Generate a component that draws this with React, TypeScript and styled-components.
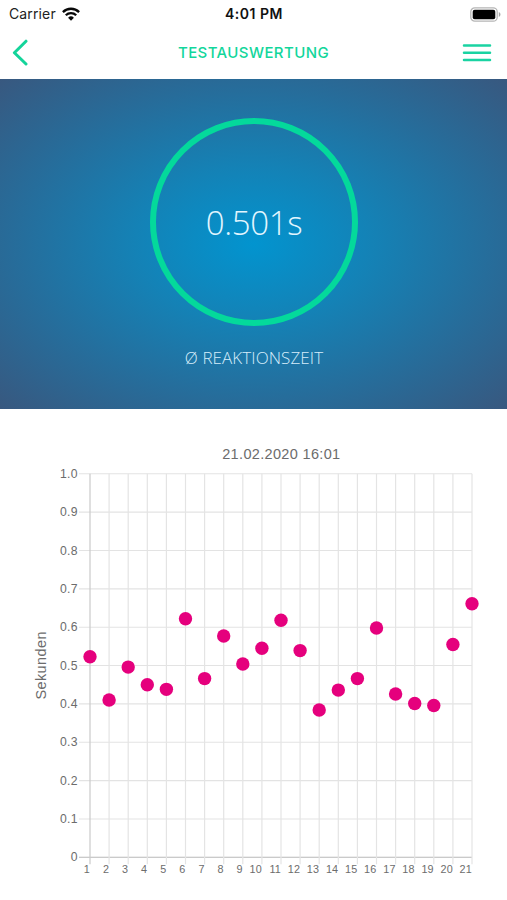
import React from 'react';
import styled, { createGlobalStyle } from 'styled-components';

const GlobalStyle = createGlobalStyle`
  * { box-sizing: border-box; }
  body { margin: 0; background: #fff; }
`;

const Screen = styled.main`
  width: 507px;
  height: 900px;
  display: flex;
  flex-direction: column;
  overflow: hidden;
  background: #fff;
`;

const StatusBar = styled.div`
  height: 27px;
  flex: none;
  display: grid;
  grid-template-columns: 1fr auto 1fr;
  align-items: center;
  padding: 1px 6px 0 9px;
  font: 400 14px/26px Inter, sans-serif;
  color: #222;
`;

const Carrier = styled.div`
  display: flex;
  align-items: center;
  gap: 6px;
  letter-spacing: 0.13px;
`;

const Clock = styled.time`
  margin-right: 2px;
  font-weight: 600;
  font-size: 14px;
  letter-spacing: 0.5px;
  color: #111;
`;

const BatteryIcon = styled.svg`
  justify-self: end;
`;

const NavBar = styled.header`
  height: 52px;
  flex: none;
  display: grid;
  grid-template-columns: 1fr auto 1fr;
  align-items: center;
  padding: 0 15px 2px 12px;
`;

const IconButton = styled.button<{ $end?: boolean }>`
  display: flex;
  padding: 0;
  border: 0;
  background: none;
  justify-self: ${(p) => (p.$end ? 'end' : 'start')};
`;

const Title = styled.h1`
  margin: 1px 0 0 3px;
  font: 500 15px/20px Inter, sans-serif;
  letter-spacing: 0.4px;
  color: #12d69b;
`;

const Hero = styled.section`
  height: 330px;
  flex: none;
  display: flex;
  flex-direction: column;
  align-items: center;
  padding: 39px 0 0 1px;
  background: radial-gradient(ellipse farthest-corner at center, #0294cf 0%, #1482b6 33%, #266d9b 66%, #38587f 100%);
`;

const Ring = styled.div`
  width: 208px;
  height: 208px;
  display: flex;
  align-items: center;
  justify-content: center;
  border: 6px solid #04d99b;
  border-radius: 50%;
  padding-top: 1px;
  font: 300 33px/40px "Open Sans", sans-serif;
  letter-spacing: -0.35px;
  color: #e2f6ff;
`;

const HeroLabel = styled.div`
  margin-top: 20px;
  font: 300 17px/24px "Open Sans", sans-serif;
  letter-spacing: 0.08px;
  color: #d6edfb;
`;

const ChartSection = styled.section`
  flex: 1;
  display: flex;
`;

const Chart = styled.svg`
  display: block;
  font-family: "Liberation Sans", Arial, sans-serif;
  fill: #6c6c6c;
`;

const LEFT = 90;
const RIGHT = 472;
const TOP = 64.8;
const BOTTOM = 448.3;

const times = [
  0.523, 0.41, 0.496, 0.45, 0.438, 0.622, 0.466, 0.577, 0.504, 0.545, 0.618,
  0.539, 0.384, 0.436, 0.466, 0.598, 0.426, 0.401, 0.396, 0.555, 0.661,
];
const ticks = ['0', '0.1', '0.2', '0.3', '0.4', '0.5', '0.6', '0.7', '0.8', '0.9', '1.0'];

const xAt = (i: number) => LEFT + (i * (RIGHT - LEFT)) / (times.length - 1);
const yAt = (v: number) => BOTTOM - v * (BOTTOM - TOP);

function ReactionChart() {
  return (
    <Chart width="507" height="491" viewBox="0 0 507 491">
      <text x="281.2" y="50" textAnchor="middle" fontSize="14.5" textLength="118">
        21.02.2020 16:01
      </text>
      <text
        transform="translate(45.5 256.5) rotate(-90)"
        textAnchor="middle"
        fontSize="14.5"
        textLength="68"
      >
        Sekunden
      </text>
      {ticks.map((label, i) => {
        const y = yAt(i / 10);
        return (
          <g key={label}>
            <line x1="79" x2={RIGHT} y1={y} y2={y} stroke={i === 0 ? '#b9b9b9' : '#e3e3e3'} strokeWidth="1.1" />
            <text x="77.8" y={y + 4} textAnchor="end" fontSize="12.2" letterSpacing="0.25">{label}</text>
          </g>
        );
      })}
      {times.map((_, i) => (
        <g key={i}>
          <line
            x1={xAt(i)}
            x2={xAt(i)}
            y1={TOP}
            y2={BOTTOM + 7}
            stroke={i === 0 ? '#cacaca' : '#e4e4e4'}
            strokeWidth="1.2"
          />
          <text x={xAt(i)} y="464.2" textAnchor="end" fontSize="10.8" letterSpacing="0.2">{i + 1}</text>
        </g>
      ))}
      {times.map((v, i) => (
        <circle key={i} cx={xAt(i)} cy={yAt(v)} r="6.7" fill="#e5007d" />
      ))}
    </Chart>
  );
}

export default function App() {
  return (
    <Screen>
      <GlobalStyle />
      <StatusBar>
        <Carrier>
          Carrier
          <svg width="18" height="14" viewBox="0 0 18 14" fill="none" stroke="#080808" strokeWidth="2.3">
            <path d="M0.9 5.1a11.5 11.5 0 0 1 16.2 0" />
            <path d="M3.8 8.2a7.4 7.4 0 0 1 10.4 0" />
            <path d="M9 13.7 6.1 10.8a4.1 4.1 0 0 1 5.8 0Z" fill="#080808" stroke="none" />
          </svg>
        </Carrier>
        <Clock>4:01 PM</Clock>
        <BatteryIcon width="31" height="15" viewBox="0 0 31 15">
          <rect x="0.8" y="0.8" width="26.4" height="13.4" rx="4" fill="#fff" stroke="#b5b5b5" strokeWidth="1.3" />
          <rect x="2.7" y="2.7" width="22.6" height="9.6" rx="2" fill="#000" />
          <path d="M28.8 5.1v4.8c2.2-.8 2.2-4 0-4.8Z" fill="#a5a5a5" />
        </BatteryIcon>
      </StatusBar>
      <NavBar>
        <IconButton aria-label="Zurück">
          <svg width="17" height="27" viewBox="0 0 17 27" fill="none" stroke="#14d49a" strokeWidth="3" strokeLinecap="round" strokeLinejoin="round">
            <path d="M14 2.2 2.4 13.7 14 25" />
          </svg>
        </IconButton>
        <Title>TESTAUSWERTUNG</Title>
        <IconButton $end aria-label="Menü">
          <svg width="30" height="19" viewBox="0 0 30 19" stroke="#1ad3a2" strokeWidth="2.5" strokeLinecap="round">
            <path d="M2 2.5h26M2 9.7h26M2 16.9h26" />
          </svg>
        </IconButton>
      </NavBar>
      <Hero>
        <Ring>0.501s</Ring>
        <HeroLabel>Ø REAKTIONSZEIT</HeroLabel>
      </Hero>
      <ChartSection>
        <ReactionChart />
      </ChartSection>
    </Screen>
  );
}
